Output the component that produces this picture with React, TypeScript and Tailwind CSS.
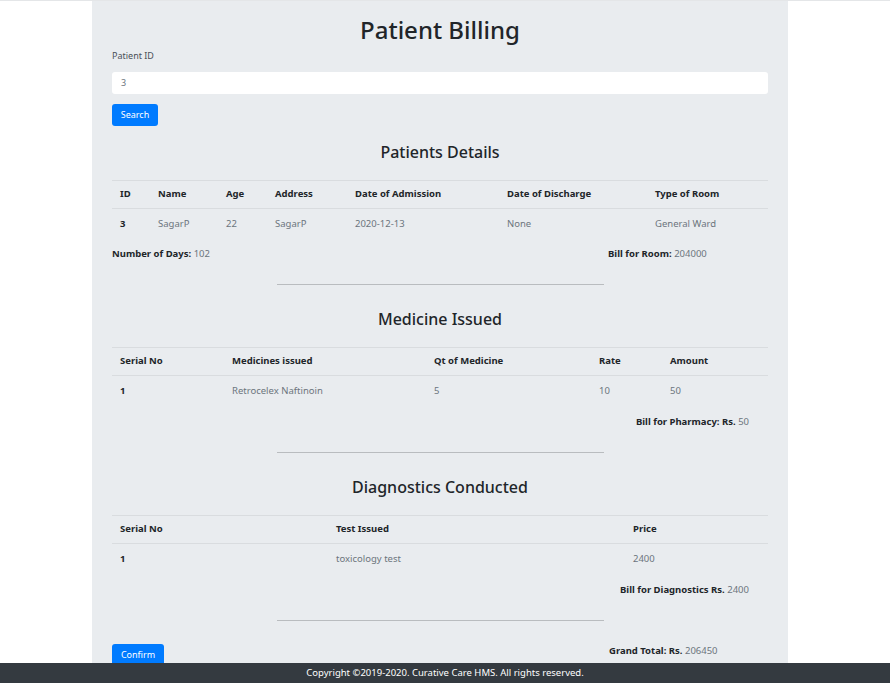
import React from "react";

const font = { fontFamily: '"Noto Sans", "Open Sans", Arial, sans-serif' };

type Col = { label: string; w: string };

function BillTable({
  cols,
  row,
}: {
  cols: Col[];
  row: string[];
}) {
  return (
    <div className="mt-[18px] w-full">
      <div className="flex h-[29px] items-center border-y border-[#d9dcdf] text-[9.5px] font-bold text-[#212529]">
        {cols.map((c) => (
          <div key={c.label} className={`${c.w} px-2`}>
            {c.label}
          </div>
        ))}
      </div>
      <div className="flex h-[31px] items-center text-[9.5px] text-[#6c757d]">
        {row.map((v, i) => (
          <div
            key={i}
            className={`${cols[i].w} px-2 ${i === 0 ? "font-bold text-[#212529]" : ""}`}
          >
            {v}
          </div>
        ))}
      </div>
    </div>
  );
}

function Divider() {
  return <div className="mx-auto mt-[23px] h-px w-[327px] bg-[#b9bcbf]" />;
}

function SectionTitle({ children }: { children: React.ReactNode }) {
  return (
    <h4 className="mt-[24px] text-center text-[16px] font-medium leading-[20px] text-[#212529]">
      {children}
    </h4>
  );
}

export default function App() {
  return (
    <div className="relative min-h-[683px] bg-white" style={font}>
      <div className="h-px w-full bg-[#e4e6e8]" />
      <div className="ml-[92px] min-h-[700px] w-[696px] bg-[#e9ecef] px-[20px] pb-10 pt-[14px]">
        <h1 className="text-center text-[24px] font-medium leading-[30px] text-[#212529]">
          Patient Billing
        </h1>
        <div className="mt-[4px] text-[9px] leading-[14px] text-[#495057]">Patient ID</div>
        <div className="mt-[9px] flex h-[22px] items-center rounded-[3px] bg-white px-[9px] text-[9px] text-[#6c757d]">
          3
        </div>
        <button className="mt-[10px] flex h-[22px] w-[46px] items-center justify-center rounded-[3px] bg-[#007bff] text-[9px] text-white">
          Search
        </button>

        <h4 className="mt-[16px] text-center text-[16px] font-medium leading-[20px] text-[#212529]">
          Patients Details
        </h4>
        <BillTable
          cols={[
            { label: "ID", w: "w-[38px]" },
            { label: "Name", w: "w-[68px]" },
            { label: "Age", w: "w-[49px]" },
            { label: "Address", w: "w-[80px]" },
            { label: "Date of Admission", w: "w-[152px]" },
            { label: "Date of Discharge", w: "w-[148px]" },
            { label: "Type of Room", w: "flex-1" },
          ]}
          row={["3", "SagarP", "22", "SagarP", "2020-12-13", "None", "General Ward"]}
        />
        <div className="mt-[7px] flex text-[9.5px] leading-[14px] text-[#6c757d]">
          <div className="w-[496px]">
            <b className="text-[#212529]">Number of Days:</b> 102
          </div>
          <div>
            <b className="text-[#212529]">Bill for Room:</b> 204000
          </div>
        </div>
        <Divider />

        <SectionTitle>Medicine Issued</SectionTitle>
        <BillTable
          cols={[
            { label: "Serial No", w: "w-[112px]" },
            { label: "Medicines issued", w: "w-[202px]" },
            { label: "Qt of Medicine", w: "w-[165px]" },
            { label: "Rate", w: "w-[71px]" },
            { label: "Amount", w: "flex-1" },
          ]}
          row={["1", "Retrocelex Naftinoin", "5", "10", "50"]}
        />
        <div className="mt-[8px] pr-[19px] text-right text-[9.5px] leading-[14px] text-[#6c757d]">
          <b className="text-[#212529]">Bill for Pharmacy: Rs.</b> 50
        </div>
        <Divider />

        <SectionTitle>Diagnostics Conducted</SectionTitle>
        <BillTable
          cols={[
            { label: "Serial No", w: "w-[216px]" },
            { label: "Test Issued", w: "w-[297px]" },
            { label: "Price", w: "flex-1" },
          ]}
          row={["1", "toxicology test", "2400"]}
        />
        <div className="mt-[8px] pr-[19px] text-right text-[9.5px] leading-[14px] text-[#6c757d]">
          <b className="text-[#212529]">Bill for Diagnostics Rs.</b> 2400
        </div>
        <Divider />

        <div className="mt-[23px] flex items-start">
          <button className="flex h-[22px] w-[52px] items-center justify-center rounded-[3px] bg-[#007bff] text-[9px] text-white">
            Confirm
          </button>
          <div className="ml-[445px] text-[9.5px] leading-[14px] text-[#6c757d]">
            <b className="text-[#212529]">Grand Total: Rs.</b> 206450
          </div>
        </div>
      </div>

      <footer className="fixed bottom-0 left-0 flex h-[20px] w-full items-center justify-center bg-[#343a40] text-[9.5px] text-white">
        Copyright ©2019-2020. Curative Care HMS. All rights reserved.
      </footer>
    </div>
  );
}
